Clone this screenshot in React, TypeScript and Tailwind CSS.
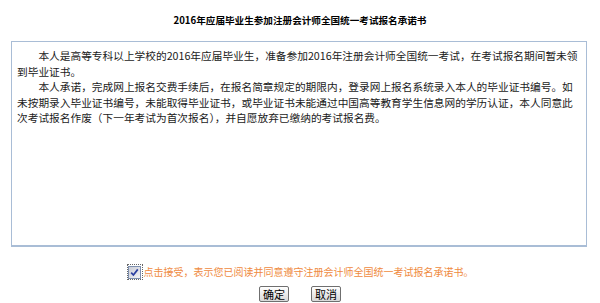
import { useState } from "react"

const cjk = "font-['Noto_Sans_CJK_SC','Noto_Sans',sans-serif]"

const paragraphs = [
  "本人是高等专科以上学校的2016年应届毕业生，准备参加2016年注册会计师全国统一考试，在考试报名期间暂未领到毕业证书。",
  "本人承诺，完成网上报名交费手续后，在报名简章规定的期限内，登录网上报名系统录入本人的毕业证书编号。如未按期录入毕业证书编号，未能取得毕业证书，或毕业证书未能通过中国高等教育学生信息网的学历认证，本人同意此次考试报名作废（下一年考试为首次报名），并自愿放弃已缴纳的考试报名费。",
]

function CheckBox({ checked, onToggle }: { checked: boolean; onToggle: () => void }) {
  return (
    <button
      type="button"
      onClick={onToggle}
      className="flex h-[16px] w-[16px] items-center justify-center border border-dotted border-[#666]"
    >
      <span className="flex h-[13px] w-[13px] items-center justify-center border border-[#7d8fae] bg-gradient-to-br from-[#c9ccd6] to-[#f3f3f6]">
        {checked && (
          <svg width="9" height="9" viewBox="0 0 9 9">
            <path d="M1.2 4.6 L3.4 7 L7.8 1.4" fill="none" stroke="#2b3fa0" strokeWidth="1.7" />
          </svg>
        )}
      </span>
    </button>
  )
}

function OldButton({ label }: { label: string }) {
  return (
    <button
      type="button"
      className={`h-[16px] w-[30px] rounded-[2px] border border-[#6f6f6f] bg-gradient-to-b from-white to-[#d8d8d8] text-[11px] leading-[14px] text-black ${cjk}`}
    >
      {label}
    </button>
  )
}

export default function App() {
  const [agreed, setAgreed] = useState(true)

  return (
    <div className={`h-[303px] w-[600px] overflow-hidden bg-white ${cjk}`}>
      <h1 className="pt-[12px] text-center text-[9.6px] font-bold leading-[16px] text-black">
        2016年应届毕业生参加注册会计师全国统一考试报名承诺书
      </h1>

      <div className="ml-[11px] mt-[13px] h-[206px] w-[576px] border border-b-2 border-[#a9bdd6] px-[5px] pt-[6px] text-[10.7px] leading-[15.6px] text-[#1a1a1a]">
        {paragraphs.map((p) => (
          <p key={p.slice(0, 6)} className="indent-[2em]">
            {p}
          </p>
        ))}
      </div>

      <div className="mt-[17px] flex h-[16px] items-center justify-center">
        <CheckBox checked={agreed} onToggle={() => setAgreed((v) => !v)} />
        <span className="ml-[1px] text-[10px] leading-[16px] text-[#ef8a3e]">
          点击接受，表示您已阅读并同意遵守注册会计师全国统一考试报名承诺书。
        </span>
      </div>

      <div className="mt-[6px] flex justify-center gap-[22px]">
        <OldButton label="确定" />
        <OldButton label="取消" />
      </div>
    </div>
  )
}
